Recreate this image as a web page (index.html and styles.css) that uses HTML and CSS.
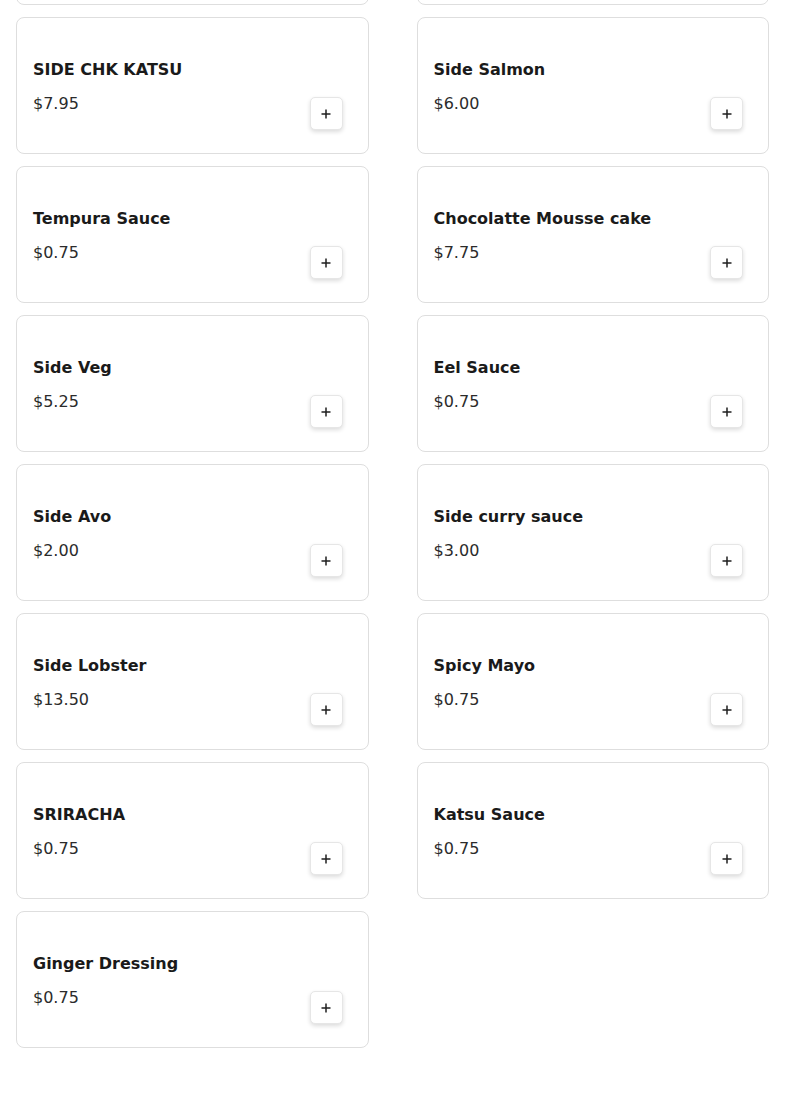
FILE: index.html
```html
<!DOCTYPE html>
<html>
<head>
<meta charset="utf-8">
<link rel="stylesheet" href="styles.css">
</head>
<body>
<div class="grid">
  <div class="card card-above"></div>
  <div class="card card-above"></div>

  <div class="card"><div class="info"><div class="name">SIDE CHK KATSU</div><div class="price">$7.95</div></div><button class="add"><svg viewBox="0 0 12 12" width="12" height="12"><path d="M6 1.5v9M1.5 6h9" stroke="#1f1f1f" stroke-width="1.5"/></svg></button></div>
  <div class="card"><div class="info"><div class="name">Side Salmon</div><div class="price">$6.00</div></div><button class="add"><svg viewBox="0 0 12 12" width="12" height="12"><path d="M6 1.5v9M1.5 6h9" stroke="#1f1f1f" stroke-width="1.5"/></svg></button></div>

  <div class="card"><div class="info"><div class="name">Tempura Sauce</div><div class="price">$0.75</div></div><button class="add"><svg viewBox="0 0 12 12" width="12" height="12"><path d="M6 1.5v9M1.5 6h9" stroke="#1f1f1f" stroke-width="1.5"/></svg></button></div>
  <div class="card"><div class="info"><div class="name">Chocolatte Mousse cake</div><div class="price">$7.75</div></div><button class="add"><svg viewBox="0 0 12 12" width="12" height="12"><path d="M6 1.5v9M1.5 6h9" stroke="#1f1f1f" stroke-width="1.5"/></svg></button></div>

  <div class="card"><div class="info"><div class="name">Side Veg</div><div class="price">$5.25</div></div><button class="add"><svg viewBox="0 0 12 12" width="12" height="12"><path d="M6 1.5v9M1.5 6h9" stroke="#1f1f1f" stroke-width="1.5"/></svg></button></div>
  <div class="card"><div class="info"><div class="name">Eel Sauce</div><div class="price">$0.75</div></div><button class="add"><svg viewBox="0 0 12 12" width="12" height="12"><path d="M6 1.5v9M1.5 6h9" stroke="#1f1f1f" stroke-width="1.5"/></svg></button></div>

  <div class="card"><div class="info"><div class="name">Side Avo</div><div class="price">$2.00</div></div><button class="add"><svg viewBox="0 0 12 12" width="12" height="12"><path d="M6 1.5v9M1.5 6h9" stroke="#1f1f1f" stroke-width="1.5"/></svg></button></div>
  <div class="card"><div class="info"><div class="name">Side curry sauce</div><div class="price">$3.00</div></div><button class="add"><svg viewBox="0 0 12 12" width="12" height="12"><path d="M6 1.5v9M1.5 6h9" stroke="#1f1f1f" stroke-width="1.5"/></svg></button></div>

  <div class="card"><div class="info"><div class="name">Side Lobster</div><div class="price">$13.50</div></div><button class="add"><svg viewBox="0 0 12 12" width="12" height="12"><path d="M6 1.5v9M1.5 6h9" stroke="#1f1f1f" stroke-width="1.5"/></svg></button></div>
  <div class="card"><div class="info"><div class="name">Spicy Mayo</div><div class="price">$0.75</div></div><button class="add"><svg viewBox="0 0 12 12" width="12" height="12"><path d="M6 1.5v9M1.5 6h9" stroke="#1f1f1f" stroke-width="1.5"/></svg></button></div>

  <div class="card"><div class="info"><div class="name">SRIRACHA</div><div class="price">$0.75</div></div><button class="add"><svg viewBox="0 0 12 12" width="12" height="12"><path d="M6 1.5v9M1.5 6h9" stroke="#1f1f1f" stroke-width="1.5"/></svg></button></div>
  <div class="card"><div class="info"><div class="name">Katsu Sauce</div><div class="price">$0.75</div></div><button class="add"><svg viewBox="0 0 12 12" width="12" height="12"><path d="M6 1.5v9M1.5 6h9" stroke="#1f1f1f" stroke-width="1.5"/></svg></button></div>

  <div class="card"><div class="info"><div class="name">Ginger Dressing</div><div class="price">$0.75</div></div><button class="add"><svg viewBox="0 0 12 12" width="12" height="12"><path d="M6 1.5v9M1.5 6h9" stroke="#1f1f1f" stroke-width="1.5"/></svg></button></div>
</div>
</body>
</html>
```
FILE: styles.css
```css
html, body {
  margin: 0;
  padding: 0;
  background: #ffffff;
  font-family: "DejaVu Sans", sans-serif;
  color: #1a1a1a;
}

.grid {
  display: grid;
  grid-template-columns: 1fr 1fr;
  column-gap: 48px;
  row-gap: 12px;
  padding: 0 16px;
  margin-top: -132px;
}

.card {
  box-sizing: border-box;
  height: 137px;
  border: 1px solid #dedede;
  border-radius: 8px;
  background: #fff;
  padding: 40px 25px 23px 16px;
  display: flex;
  justify-content: space-between;
  align-items: flex-end;
}

.info {
  padding-bottom: 15px;
  align-self: flex-start;
}

.name {
  font-size: 16px;
  font-weight: bold;
  line-height: 24px;
  color: #1a1a1a;
}

.price {
  margin-top: 10px;
  font-size: 16px;
  line-height: 24px;
  color: #2b2b2b;
}

.add {
  box-sizing: border-box;
  width: 33px;
  height: 33px;
  padding: 0;
  border: 1px solid #e6e6e6;
  border-radius: 5px;
  background: #fff;
  box-shadow: 0 2px 4px rgba(0, 0, 0, 0.14);
  display: flex;
  align-items: center;
  justify-content: center;
  flex: none;
}
```
